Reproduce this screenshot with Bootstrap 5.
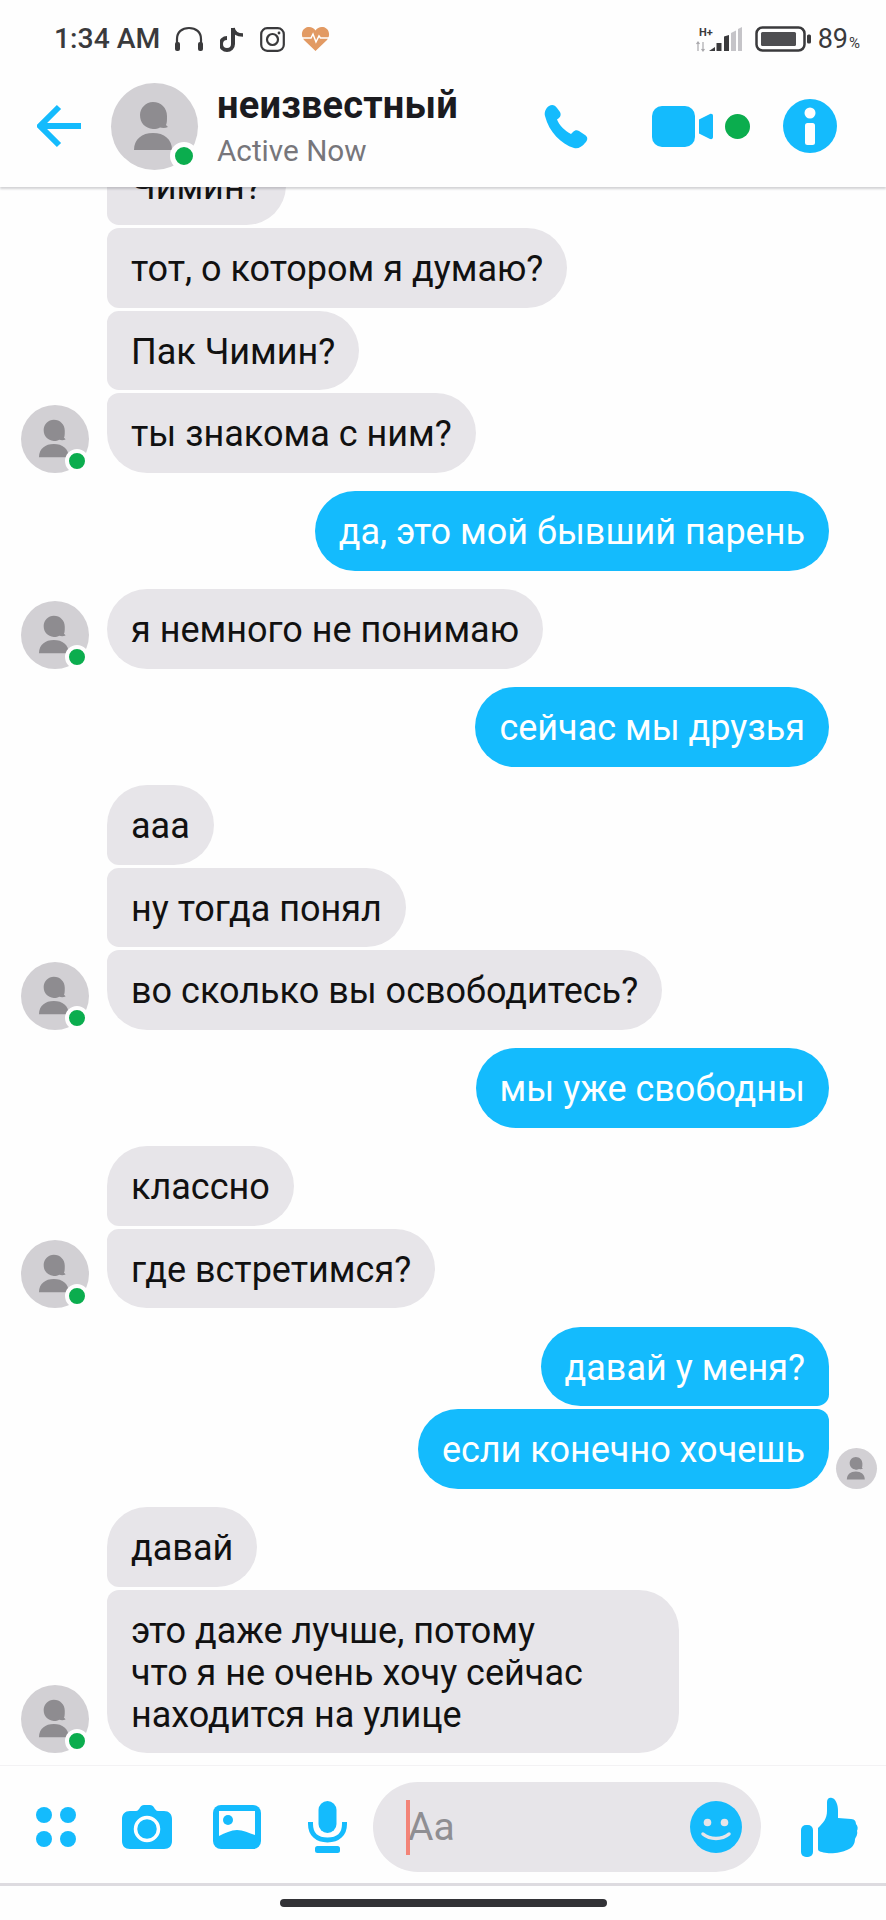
<!DOCTYPE html>
<html lang="ru">
<head>
<meta charset="utf-8">
<title>Messenger</title>
<link href="https://cdn.jsdelivr.net/npm/bootstrap@5.3.0/dist/css/bootstrap.min.css" rel="stylesheet">
<style>
html,body{margin:0;background:#fefefe}
.app-shell{width:886px;height:1920px;font-family:Roboto,"Liberation Sans",sans-serif;background:#fefefe;overflow:hidden}
svg{display:block;flex:none}
.status-row{height:65px;padding:13px 26px 0 54px;color:#3a3a3c}
.status-time{font-size:28.300px;font-weight:500;line-height:1;margin-right:14px}
.status-batt{font-size:27px;line-height:1;color:#3a3a3c;margin-left:-1px}
.status-batt small{font-size:15px;margin-left:1px}
.chat-head{height:122px;padding-left:37px;background:#fefefe;box-shadow:0 2px 2px rgba(60,60,70,.22);position:relative;z-index:2}
.head-ava{position:relative;width:87px;height:87px;margin-left:30px;margin-right:19px;flex:none}
.ava-round{border-radius:50%;background:#d2d0d4;width:100%;height:100%}
.live-dot{position:absolute;border-radius:50%;background:#0bad4e;border:solid #fefefe}
.head-ava .live-dot{width:28px;height:28px;border-width:5px;right:0;bottom:0}
.head-name{font-size:38px;font-weight:700;line-height:42px;color:#1b1b1f;letter-spacing:.2px}
.head-sub{font-size:29.700px;line-height:34px;color:#77767b;margin-top:8px}
.head-title{width:327px}
.green-spot{width:25px;height:25px;border-radius:50%;background:#0bad4e;margin-left:11px;margin-right:33px}
.msg-area{flex:1 1 0;min-height:0;overflow:hidden;padding-bottom:12px}
.msg-group{margin-top:18.5px}
.from-them{padding-left:21px}
.from-me{padding-right:9px}
.small-slot{width:41px;height:41px;margin-left:7px;flex:none}
.big-slot{width:68px;height:68px;margin-right:18px;flex:none;position:relative}
.big-slot .live-dot{width:24px;height:24px;border-width:4px;right:0;bottom:0}
.msg-stack{gap:3px}
.talk{font-size:36px;line-height:42px;padding:20px 24px 17.500px;width:fit-content;border-radius:40px;color:#111}
.talk.wide-talk{width:572px}
.from-them .talk{background:#e7e5e9}
.from-me .talk{background:#14bbfd;color:#fff}
.from-them .talk.mid{border-top-left-radius:12px;border-bottom-left-radius:12px}
.from-them .talk.first{border-bottom-left-radius:12px}
.from-them .talk.last{border-top-left-radius:12px}
.from-me .talk.first{border-bottom-right-radius:12px}
.from-me .talk.last{border-top-right-radius:12px}
.compose-row{height:121px;padding:18px 0 13px 36px;border-top:1px solid #f3f2f4;border-bottom:3px solid #dddbe0;background:#fefefe}
.tile-dots{display:grid;grid-template-columns:16px 16px;gap:8px;margin-right:46px}
.tile-dots i{width:16px;height:16px;border-radius:50%;background:#14bbfd;display:block}
.input-pill{width:388px;height:90px;margin-left:26px;border-radius:45px;background:#e7e5e9;padding:0 19px 0 33px;margin-right:40px;flex:none}
.caret-bar{width:4px;height:55px;background:#f4796c;opacity:.9;margin-right:-2px;flex:none}
.input-hint{font-size:39px;line-height:1;color:#8f8e92}
.home-zone{height:34px}
.home-bar{width:327px;height:8px;border-radius:4px;background:#323236}
</style>
</head>
<body>
<svg width="0" height="0" style="position:absolute">
  <symbol id="person" viewBox="0 0 87 87">
    <path fill="#8e8c90" d="M42 19C50 19 56 25 56 33C56 37 56 40 55 42C56 43 57 44 57 44C54 45.500 51 45 49 44.500C47 45.800 45 46 42 46C34 45 29 40 29 32C29 25 35 19 42 19Z"/>
    <path fill="#8e8c90" d="M23 67C23 56 31 50 42 50C53 50 61 56 61 67Z"/>
  </symbol>
</svg>
<div class="app-shell d-flex flex-column">
  <div class="status-row d-flex align-items-center">
    <span class="status-time">1:34 AM</span>
    <svg width="30" height="26" viewBox="0 0 30 26" class="me-3"><path d="M3 20V13C3 6 8 2 15 2C22 2 27 6 27 13V20" fill="none" stroke="#3a3a3c" stroke-width="2.200"/><rect x="1" y="16" width="5" height="9" rx="2" fill="#3a3a3c"/><rect x="24" y="16" width="5" height="9" rx="2" fill="#3a3a3c"/></svg>
    <svg width="24" height="26" viewBox="0 0 24 26" class="me-3"><path d="M13 2V18A6 6 0 1 1 7 12" fill="none" stroke="#3a3a3c" stroke-width="4"/><path d="M13 2C14 7 18 9 23 9" fill="none" stroke="#3a3a3c" stroke-width="3.500"/></svg>
    <svg width="25" height="25" viewBox="0 0 25 25" class="me-3"><rect x="1.200" y="1.200" width="22.600" height="22.600" rx="6" fill="none" stroke="#3a3a3c" stroke-width="2.200"/><circle cx="12.500" cy="12.500" r="5.500" fill="none" stroke="#3a3a3c" stroke-width="2.200"/><circle cx="19" cy="6" r="1.400" fill="#3a3a3c"/></svg>
    <svg width="29" height="26" viewBox="0 0 29 26"><path d="M14.500 25L3 14C-1 9 1 2 7 1C10 .5 13 2 14.500 4.500C16 2 19 .5 22 1C28 2 30 9 26 14Z" fill="#e29a63"/><path d="M1 12H10L12 8L15 16L18 10L19.500 12H28" fill="none" stroke="#fff" stroke-width="1.500"/></svg>
    <div class="ms-auto d-flex align-items-center">
      <svg width="47" height="26" viewBox="0 0 47 26" style="margin-right:13px"><text x="4" y="10" font-family="Roboto,sans-serif" font-weight="700" font-size="11" fill="#3a3a3c">H+</text><path d="M3 25V16M1.500 18L3 16L4.500 18M8 16V25M6.500 23L8 25L9.500 23" stroke="#a9a8ac" stroke-width="1.200" fill="none"/><path d="M14 25L20 21V25ZM21.500 25V17H26.500V25ZM29 25V10.500L34 9V25Z" fill="#3a3a3c"/><path d="M36 25V7L41 4.500V25ZM43 25V3L47 1V25Z" fill="#c5c4c8"/></svg>
      <svg width="57" height="26" viewBox="0 0 57 26" style="margin-right:7px"><rect x="1.500" y="1.500" width="48" height="23" rx="6" fill="none" stroke="#3a3a3c" stroke-width="2.500"/><rect x="6" y="6" width="35" height="14" rx="1.500" fill="#4d4d50"/><rect x="52" y="8.500" width="4" height="9" rx="1.500" fill="#3a3a3c"/></svg>
      <span class="status-batt">89<small>%</small></span>
    </div>
  </div>
  <header class="chat-head d-flex align-items-center">
    <svg width="44" height="44" viewBox="0 0 44 44"><path d="M44 22H5M22 3L3 22L22 41" fill="none" stroke="#14bbfd" stroke-width="6"/></svg>
    <div class="head-ava">
      <div class="ava-round"><svg width="87" height="87"><use href="#person"/></svg></div>
      <span class="live-dot"></span>
    </div>
    <div class="head-title">
      <div class="head-name">неизвестный</div>
      <div class="head-sub">Active Now</div>
    </div>
    <svg width="44" height="45" viewBox="0 0 44 45"><path fill="#14bbfd" d="M5 2C8 0 11 1 13 4L16 8C17 10 17 12 15 14L13 15.500C15 21 21 27 27 30L29 28C31 26 33 26 35 27L41 31C44 33 44 36 41 39C38 43 34 45 30 44C17 40 5 28 1 12C0 8 2 4 5 2Z"/></svg>
    <svg width="62" height="41" viewBox="0 0 62 41" class="video-ico" style="margin-left:64px"><rect width="43" height="41" rx="10" fill="#14bbfd"/><path d="M47 13.500L58 8C60 7.500 61 8.500 61 10V31C61 32.500 60 33.500 58 33L47 27.500Z" fill="#14bbfd"/></svg>
    <span class="green-spot"></span>
    <svg width="54" height="54" viewBox="0 0 54 54"><circle cx="27" cy="27" r="27" fill="#14bbfd"/><circle cx="27" cy="14" r="5.500" fill="#fefefe"/><rect x="22" y="24" width="10" height="22" rx="2.500" fill="#fefefe"/></svg>
  </header>
  <main class="msg-area d-flex flex-column justify-content-end">
    <div class="msg-group from-them d-flex align-items-end">
      <div class="big-slot"><div class="ava-round"><svg width="68" height="68"><use href="#person"/></svg></div><span class="live-dot"></span></div>
      <div class="msg-stack d-flex flex-column">
        <div class="talk mid">Чимин?</div>
        <div class="talk mid">тот, о котором я думаю?</div>
        <div class="talk mid">Пак Чимин?</div>
        <div class="talk last">ты знакома с ним?</div>
      </div>
    </div>
    <div class="msg-group from-me d-flex justify-content-end align-items-end">
      <div class="talk">да, это мой бывший парень</div><div class="small-slot"></div>
    </div>
    <div class="msg-group from-them d-flex align-items-end">
      <div class="big-slot"><div class="ava-round"><svg width="68" height="68"><use href="#person"/></svg></div><span class="live-dot"></span></div>
      <div class="talk">я немного не понимаю</div>
    </div>
    <div class="msg-group from-me d-flex justify-content-end align-items-end">
      <div class="talk">сейчас мы друзья</div><div class="small-slot"></div>
    </div>
    <div class="msg-group from-them d-flex align-items-end">
      <div class="big-slot"><div class="ava-round"><svg width="68" height="68"><use href="#person"/></svg></div><span class="live-dot"></span></div>
      <div class="msg-stack d-flex flex-column">
        <div class="talk first">ааа</div>
        <div class="talk mid">ну тогда понял</div>
        <div class="talk last">во сколько вы освободитесь?</div>
      </div>
    </div>
    <div class="msg-group from-me d-flex justify-content-end align-items-end">
      <div class="talk">мы уже свободны</div><div class="small-slot"></div>
    </div>
    <div class="msg-group from-them d-flex align-items-end">
      <div class="big-slot"><div class="ava-round"><svg width="68" height="68"><use href="#person"/></svg></div><span class="live-dot"></span></div>
      <div class="msg-stack d-flex flex-column">
        <div class="talk first">классно</div>
        <div class="talk last">где встретимся?</div>
      </div>
    </div>
    <div class="msg-group from-me d-flex justify-content-end align-items-end">
      <div class="msg-stack d-flex flex-column align-items-end">
        <div class="talk first">давай у меня?</div>
        <div class="talk last">если конечно хочешь</div>
      </div>
      <div class="small-slot"><div class="ava-round"><svg width="41" height="41"><use href="#person"/></svg></div></div>
    </div>
    <div class="msg-group from-them d-flex align-items-end">
      <div class="big-slot"><div class="ava-round"><svg width="68" height="68"><use href="#person"/></svg></div><span class="live-dot"></span></div>
      <div class="msg-stack d-flex flex-column">
        <div class="talk first">давай</div>
        <div class="talk last wide-talk">это даже лучше, потому<br>что я не очень хочу сейчас<br>находится на улице</div>
      </div>
    </div>
  </main>
  <footer class="compose-row d-flex align-items-center">
    <div class="tile-dots"><i></i><i></i><i></i><i></i></div>
    <svg width="50" height="44" viewBox="0 0 50 44" style="margin-right:41px"><path fill="#14bbfd" d="M8 6H14C16 6 17 4 18 2.500C19 1 20 0 22 0H28C30 0 31 1 32 2.500C33 4 34 6 36 6H42C47 6 50 9 50 14V36C50 41 47 44 42 44H8C3 44 0 41 0 36V14C0 9 3 6 8 6Z"/><circle cx="25" cy="24" r="11.500" fill="none" stroke="#fefefe" stroke-width="3.500"/></svg>
    <svg width="48" height="44" viewBox="0 0 48 44" style="margin-right:47px"><rect width="48" height="44" rx="8" fill="#14bbfd"/><path fill="#fefefe" d="M6 6H42V30C36 28 30 25 24 25C18 25 12 28 6 31Z"/><circle cx="15" cy="15" r="5" fill="#14bbfd"/></svg>
    <svg width="39" height="52" viewBox="0 0 39 52"><rect x="10.500" y="0" width="18" height="32" rx="9" fill="#14bbfd"/><path d="M2.500 21V23C2.500 33 9 39 19.500 39C30 39 36.500 33 36.500 23V21" fill="none" stroke="#14bbfd" stroke-width="5"/><rect x="7" y="45" width="25" height="7" rx="2.500" fill="#14bbfd"/></svg>
    <div class="input-pill d-flex align-items-center">
      <span class="caret-bar"></span><span class="input-hint">Aa</span>
      <svg width="52" height="52" viewBox="0 0 52 52" class="ms-auto"><circle cx="26" cy="26" r="26" fill="#14bbfd"/><circle cx="17.500" cy="21.500" r="3.800" fill="#e7e5e9"/><circle cx="34.500" cy="21.500" r="3.800" fill="#e7e5e9"/><path d="M13 33C20 39 32 39 39 33" fill="none" stroke="#e7e5e9" stroke-width="3.500" stroke-linecap="round"/></svg>
    </div>
    <svg width="58" height="60" viewBox="0 0 58 60"><rect x="0" y="28" width="12" height="32" rx="5" fill="#14bbfd"/><path fill="#14bbfd" d="M17 31C22 26 26 22 26 14L26 5C26 1 29 0 31 1C35 2 37 8 37 14L37 21L50 22C54 22 55 25 55 27C57 29 57 32 56 34C57 37 55 40 54 42C54 46 52 51 46 53C42 55 32 57 26 56C21 55 17 55 17 52Z"/></svg>
  </footer>
  <div class="home-zone d-flex align-items-center justify-content-center"><div class="home-bar"></div></div>
</div>
</body>
</html>
